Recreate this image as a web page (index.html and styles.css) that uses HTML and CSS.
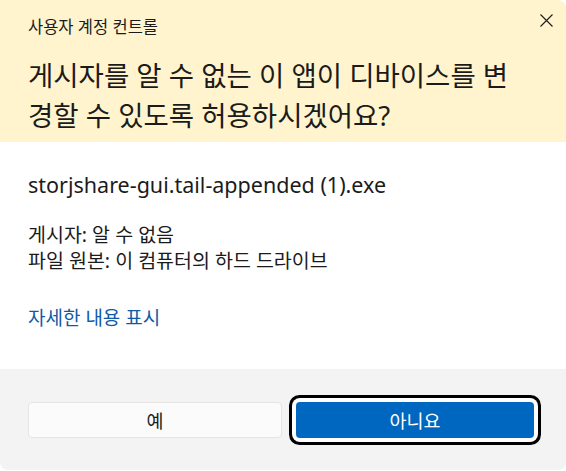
FILE: index.html
```html
<!DOCTYPE html>
<html lang="ko">
<head>
    <meta charset="UTF-8" />
    <meta name="viewport" content="width=device-width, initial-scale=1" />
    <title>사용자 계정 컨트롤</title>
    <link rel="stylesheet" href="styles.css">
</head>
<body>

    <div class="dialog">

        <header class="uac-head">
            <div class="uac-title">사용자 계정 컨트롤</div>
            <button class="close-btn" aria-label="닫기">
                <svg width="13" height="13" viewBox="0 0 13 13">
                    <path d="M0.5 0.5 L12.5 12.5 M12.5 0.5 L0.5 12.5" stroke="#1b1b1b" stroke-width="1.1" fill="none" />
                </svg>
            </button>
            <h1>게시자를 알 수 없는 이 앱이 디바이스를 변<br>경할 수 있도록 허용하시겠어요?</h1>
        </header>

        <section class="uac-body">
            <p class="file-name">storjshare-gui.tail-appended (1).exe</p>
            <p class="meta">게시자: 알 수 없음<br>파일 원본: 이 컴퓨터의 하드 드라이브</p>
            <a class="details-link" href="#">자세한 내용 표시</a>
        </section>

        <footer class="uac-foot">
            <button class="btn btn-yes">예</button>
            <button class="btn btn-no">아니요</button>
        </footer>

    </div>

</body>
</html>
```

FILE: styles.css
```css
body {
    margin: 0;
    background: #fff;
    font-family: "Noto Sans", "Noto Sans CJK KR", sans-serif;
    color: #1b1b1b;
}

.dialog {
    width: 566px;
    height: 470px;
    display: flex;
    flex-direction: column;
    border-radius: 0 8px 8px 8px;
    overflow: hidden;
    position: relative;
}

/* Yellow warning header */
.uac-head {
    background: #fff4ce;
    padding: 16px 20px 6px 28px;
}

.uac-title {
    font-size: 16.5px;
    line-height: 22px;
}

.close-btn {
    position: absolute;
    top: 14px;
    right: 13px;
    width: 13px;
    height: 13px;
    padding: 0;
    border: none;
    background: none;
    display: flex;
}

.uac-head h1 {
    margin: 18px 0 0;
    font-size: 27.5px;
    line-height: 40px;
    font-weight: normal;
    white-space: nowrap;
}

/* White body */
.uac-body {
    background: #fff;
    padding: 29px 28px 0;
    flex: 1;
}

.file-name {
    margin: 0;
    font-size: 21.5px;
    line-height: 28px;
}

.meta {
    margin: 23px 0 0;
    font-size: 19.5px;
    line-height: 26px;
}

.details-link {
    display: inline-block;
    margin-top: 31px;
    font-size: 19px;
    line-height: 26px;
    color: #0f5aa8;
    text-decoration: none;
}

/* Button row */
.uac-foot {
    background: #f3f3f3;
    height: 101px;
    box-sizing: border-box;
    padding: 33px 32px 0 28px;
    display: flex;
    align-items: flex-start;
    gap: 14px;
}

.btn {
    height: 36px;
    border-radius: 4px;
    font-family: "Noto Sans", "Noto Sans CJK KR", sans-serif;
    font-size: 18.5px;
    padding: 0;
}

.btn-yes {
    flex: 0 0 254px;
    background: #fbfbfb;
    border: 1px solid #e5e5e5;
    color: #1b1b1b;
}

.btn-no {
    flex: 1;
    background: #0067c0;
    border: none;
    color: #fff;
    box-shadow: 0 0 0 4px #fff, 0 0 0 7px #000;
}
```
